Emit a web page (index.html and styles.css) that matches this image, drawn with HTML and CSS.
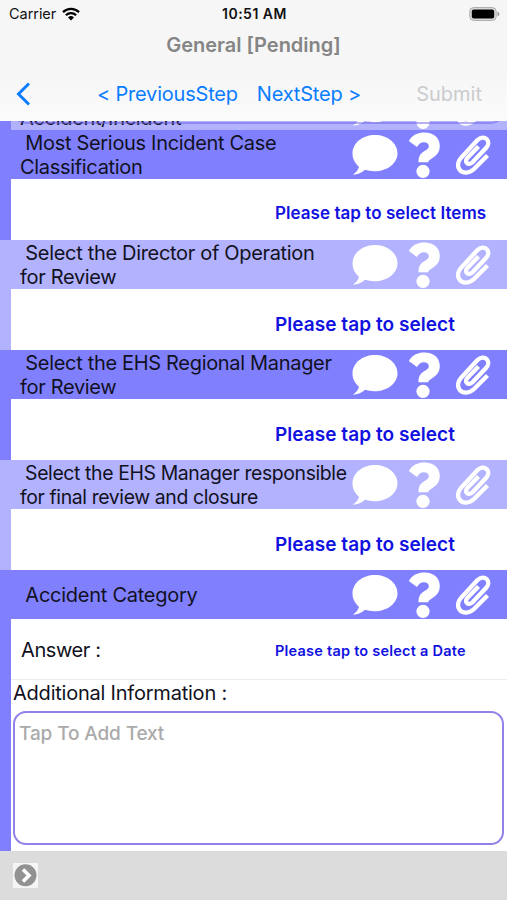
FILE: index.html
```
<!DOCTYPE html>
<html lang="en">

<head>
    <meta charset="UTF-8">
    <meta name="viewport" content="width=device-width, initial-scale=1.0">
    <title>General [Pending]</title>
    <link rel="stylesheet" href="styles.css">
</head>

<body>
    <!-- Shared icons -->
    <svg class="icon-defs" width="0" height="0">
        <symbol id="icon-comment" viewBox="0 0 46 42">
            <path d="M23 1C10.500 1 .5 9 .5 19.500c0 5.500 2.700 10 6.500 13.200C6.200 36 4 38.500.8 40.800c5.500-.2 9-2.200 12.200-5 2.800.9 5.800 1.400 9.500 1.400 13 0 23-8 23-18S35.500 1 23 1z" fill="#fff"/>
        </symbol>
        <symbol id="icon-help" viewBox="0 0 32 46">
            <path d="M.8 9C4 3 9.500.4 16.500.4 26 .4 31.800 6 31.800 14c0 6.500-3.500 9.500-7.300 12-2.800 1.800-4 2.500-4.300 4.200H10.500c-.2-6 2-8.700 6-11.200 2.700-1.700 4.300-2.700 4.300-4.800 0-2.500-2-4-5-4-3.200 0-5 1.500-6.800 4.800z" fill="#fff"/>
            <circle cx="15" cy="39.300" r="6.600" fill="#fff"/>
        </symbol>
        <symbol id="icon-clip" viewBox="0 0 35 40">
            <path d="M31.500 20.500 18 34C13 38.500 7 38.500 4 35.200c-3.200-3.500-2.200-8.700 1-12.300L21.500 5c3-3 7-3.200 9.300-.8 2.300 2.500 1.700 6.100-.8 8.800L16.500 27.200c-2 2-4.300 2-5.600.7-1.300-1.300-1-3.500.6-5.200L22.500 11.500" fill="none" stroke="#fff" stroke-width="4.300" stroke-linejoin="round"/>
        </symbol>
    </svg>

    <div class="screen">
        <header class="header">
            <div class="status-bar">
                <div class="carrier">
                    <span class="carrier-name">Carrier</span>
                    <svg width="18" height="14" viewBox="0 0 18 14">
                        <path d="M1 5.200a11.500 11.500 0 0 1 16 0M3.900 8.200a7.300 7.300 0 0 1 10.200 0" fill="none" stroke="#000" stroke-width="2.300"/>
                        <path d="M9 13.500 6 10.500a4.300 4.300 0 0 1 6 0z"/>
                    </svg>
                </div>
                <span class="time">10:51 AM</span>
                <svg class="battery" width="31" height="14" viewBox="0 0 31 14">
                    <rect x=".8" y=".6" width="26.400" height="12.800" rx="3.800" fill="#ddd" stroke="#aaa"/>
                    <rect x="2.800" y="2.500" width="22.400" height="9" rx="2"/>
                    <path d="M28.500 4.500c2.500.8 2.500 4.200 0 5z" fill="#999"/>
                </svg>
            </div>
            <h1 class="title">General [Pending]</h1>
            <nav class="nav">
                <svg class="back" width="15" height="24" viewBox="0 0 15 24">
                    <path d="M13 1.500 2.500 12 13 22.500" fill="none" stroke="#0a7cff" stroke-width="3"/>
                </svg>
                <a class="previous">&lt; PreviousStep</a>
                <a class="next">NextStep &gt;</a>
                <span class="submit">Submit</span>
            </nav>
        </header>

        <main class="questions">
            <section class="question clipped">
                <div class="question-head light">
                    <h2>Accident/Incident</h2>
                    <div class="icons">
                        <svg class="comment"><use href="#icon-comment"/></svg>
                        <svg class="help"><use href="#icon-help"/></svg>
                        <svg class="clip"><use href="#icon-clip"/></svg>
                    </div>
                </div>
            </section>

            <section class="question">
                <div class="question-head">
                    <h2>&nbsp;Most Serious Incident Case<br>Classification</h2>
                    <div class="icons">
                        <svg class="comment"><use href="#icon-comment"/></svg>
                        <svg class="help"><use href="#icon-help"/></svg>
                        <svg class="clip"><use href="#icon-clip"/></svg>
                    </div>
                </div>
                <div class="answer"><a class="select items">Please tap to select Items</a></div>
            </section>

            <section class="question light">
                <div class="question-head">
                    <h2>&nbsp;Select the Director of Operation<br>for Review</h2>
                    <div class="icons">
                        <svg class="comment"><use href="#icon-comment"/></svg>
                        <svg class="help"><use href="#icon-help"/></svg>
                        <svg class="clip"><use href="#icon-clip"/></svg>
                    </div>
                </div>
                <div class="answer"><a class="select">Please tap to select</a></div>
            </section>

            <section class="question">
                <div class="question-head">
                    <h2>&nbsp;Select the EHS Regional Manager<br>for Review</h2>
                    <div class="icons">
                        <svg class="comment"><use href="#icon-comment"/></svg>
                        <svg class="help"><use href="#icon-help"/></svg>
                        <svg class="clip"><use href="#icon-clip"/></svg>
                    </div>
                </div>
                <div class="answer"><a class="select">Please tap to select</a></div>
            </section>

            <section class="question light">
                <div class="question-head">
                    <h2 class="tight">&nbsp;Select the EHS Manager responsible<br>for final review and closure</h2>
                    <div class="icons">
                        <svg class="comment"><use href="#icon-comment"/></svg>
                        <svg class="help"><use href="#icon-help"/></svg>
                        <svg class="clip"><use href="#icon-clip"/></svg>
                    </div>
                </div>
                <div class="answer"><a class="select">Please tap to select</a></div>
            </section>

            <section class="question last">
                <div class="question-head">
                    <h2>&nbsp;Accident Category</h2>
                    <div class="icons">
                        <svg class="comment"><use href="#icon-comment"/></svg>
                        <svg class="help"><use href="#icon-help"/></svg>
                        <svg class="clip"><use href="#icon-clip"/></svg>
                    </div>
                </div>
                <div class="answer dated">
                    <span class="answer-label">Answer :</span>
                    <a class="select date">Please tap to select a Date</a>
                </div>
                <div class="additional">
                    <label for="additional-info">Additional Information :</label>
                    <textarea id="additional-info" placeholder="Tap To Add Text"></textarea>
                </div>
            </section>
        </main>

        <footer class="toolbar">
            <svg width="25" height="25" viewBox="0 0 25 25">
                <path d="M0 0h25v25H0z" fill="#f5f5f5"/>
                <circle cx="12.500" cy="12.300" r="11" fill="#929292"/>
                <path d="m10 6.500 6 6-6 6" fill="none" stroke="#fff" stroke-width="3.600"/>
            </svg>
        </footer>
    </div>
</body>

</html>
```
FILE: styles.css
```
* {
    box-sizing: border-box;
}

body {
    font-family: Inter, 'Liberation Sans', sans-serif;
    margin: 0;
    color: #111122;
    background: #fff;
}

.icon-defs {
    display: none;
}

.screen {
    display: flex;
    flex-direction: column;
    height: 900px;
    overflow: hidden;
}

/* Header */
.header {
    height: 121px;
    flex: none;
    background: linear-gradient(#f6f6f7 60%, #fbfbfc);
}

.status-bar {
    display: grid;
    grid-template-columns: 1fr auto 1fr;
    align-items: center;
    height: 27px;
    padding: 0 7px 0 9px;
    font-size: 14px;
    color: #111;
}

.carrier {
    display: flex;
    align-items: center;
    gap: 6px;
}

.carrier-name {
    font-size: 14.5px;
    letter-spacing: -0.05px;
}

.time {
    font-weight: 600;
    letter-spacing: 0.5px;
}

.battery {
    justify-self: end;
}

.title {
    margin: 0;
    height: 36px;
    line-height: 36px;
    text-align: center;
    font-size: 20px;
    font-weight: 600;
    color: #858585;
}

.nav {
    display: flex;
    align-items: center;
    height: 62px;
    padding: 0 25px 0 16px;
    font-size: 20px;
    color: #0a7cff;
}

.previous {
    margin-left: 66px;
    letter-spacing: -0.2px;
}

.next {
    margin-left: 19px;
    letter-spacing: -0.2px;
}

.submit {
    margin-left: auto;
    color: #ccc;
}

/* Questions */
.questions {
    flex: none;
    height: 730px;
    overflow: hidden;
}

.question {
    height: 110px;
    border-left: 11px solid #8080ff;
}

.question.light {
    border-color: #b2b2ff;
}

.question-head {
    display: flex;
    align-items: center;
    justify-content: space-between;
    height: 49px;
    padding: 0 16px 0 9px;
    background: #8080ff;
}

.light .question-head,
.question-head.light {
    background: #b2b2ff;
}

.question h2 {
    margin: 0;
    font-size: 20px;
    font-weight: 400;
    line-height: 24px;
    letter-spacing: -0.32px;
    white-space: nowrap;
}

.question h2.tight {
    font-size: 19.4px;
    letter-spacing: -0.37px;
}

.question.clipped {
    position: relative;
    display: flex;
    flex-direction: column;
    justify-content: flex-end;
    height: 9px;
    overflow: hidden;
}

.clipped .question-head {
    flex: none;
}

.clipped h2 {
    align-self: flex-end;
}

/* bottom edge of the text box above */
.clipped::after {
    content: '';
    position: absolute;
    right: 3px;
    bottom: 6px;
    left: 2px;
    height: 40px;
    border: 2px solid rgba(110, 95, 225, 0.5);
    border-radius: 13px;
}

.icons {
    display: flex;
    align-items: center;
    flex: none;
}

.comment {
    width: 46px;
    height: 42px;
}

.help {
    width: 32px;
    height: 46px;
    margin-left: 10px;
}

.clip {
    width: 35px;
    height: 40px;
    margin-left: 16px;
}

.answer {
    display: flex;
    align-items: center;
    height: 61px;
    padding: 9px 0 0 264px;
    background: #fff;
}

.select {
    font-size: 19px;
    font-weight: 600;
    letter-spacing: 0.05px;
    color: #1111e0;
    white-space: nowrap;
}

.select.items {
    padding-bottom: 2px;
    font-size: 17px;
}

.select.date {
    font-size: 14.5px;
    letter-spacing: 0.23px;
}

.question.last {
    height: 281px;
}

.last h2 {
    letter-spacing: -0.26px;
}

.answer.dated {
    padding: 2px 0 0 10px;
    border-bottom: 1px solid #ededed;
}

.answer-label {
    width: 254px;
    font-size: 20px;
    letter-spacing: -0.4px;
}

.additional {
    padding: 0 3px 0 2px;
}

.additional label {
    display: block;
    height: 31px;
    line-height: 26px;
    font-size: 20px;
    letter-spacing: -0.22px;
}

.additional textarea {
    display: block;
    width: 100%;
    height: 134px;
    padding: 9px 4px;
    border: 2px solid #9182e8;
    border-radius: 13px;
    background: #fff;
    font-family: inherit;
    font-size: 19px;
    font-weight: 500;
    letter-spacing: -0.12px;
    resize: none;
}

.additional textarea::placeholder {
    color: #aaa;
}

/* Footer */
.toolbar {
    flex: 1;
    padding: 12px 13px;
    background: #dcdcdc;
}
```
